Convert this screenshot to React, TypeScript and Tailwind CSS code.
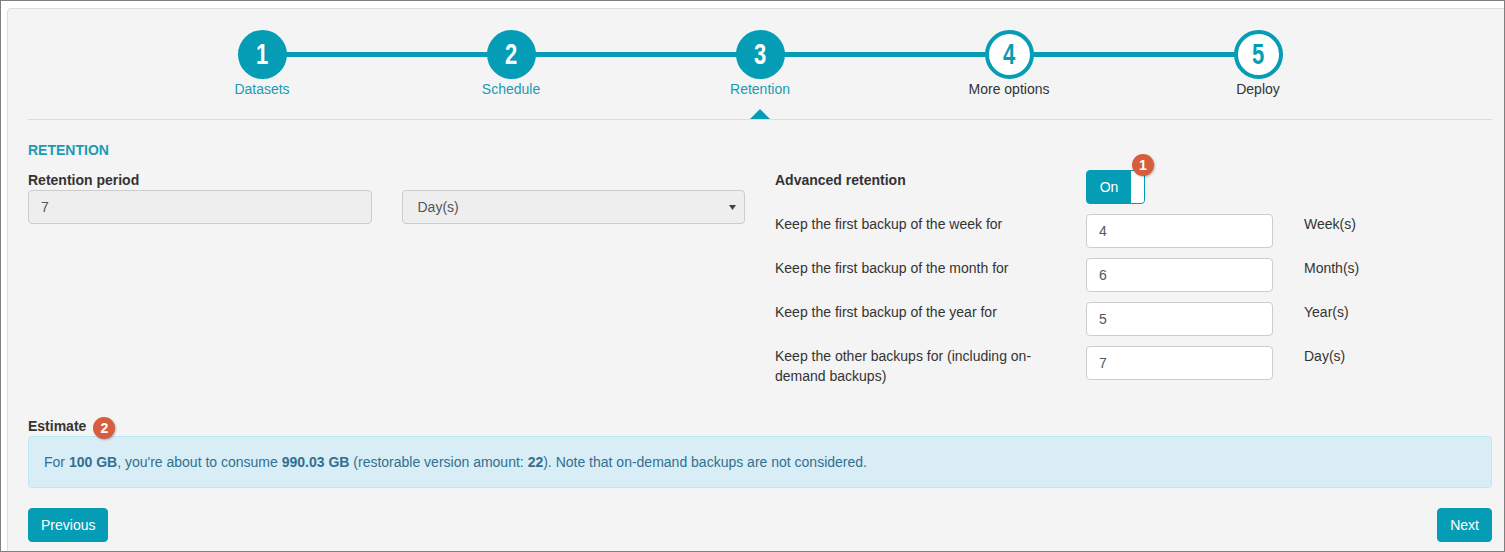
import React from "react";

function Step({ n, label, done }: { n: number; label: string; done: boolean }) {
  return (
    <div className="flex-1 flex flex-col items-center">
      <div
        className={
          done
            ? "relative z-10 w-[49px] h-[49px] rounded-full bg-[#049db5] text-white flex items-center justify-center"
            : "relative z-10 w-[49px] h-[49px] rounded-full bg-white border-[4px] border-[#049db5] text-[#049db5] flex items-center justify-center"
        }
      >
        <span className="inline-block scale-x-[0.76] font-bold text-[29px] leading-none font-['Liberation_Sans',Arial,sans-serif]">
          {n}
        </span>
      </div>
      <div className={done ? "text-[14px] leading-[20px] text-[#1a9bb4]" : "text-[14px] leading-[20px] text-[#333]"}>
        {label}
      </div>
    </div>
  );
}

function Badge({ n, className }: { n: number; className: string }) {
  return (
    <span
      className={
        "absolute w-[22px] h-[22px] rounded-full bg-[#d65d3d] text-white text-[14px] font-bold leading-none flex items-center justify-center shadow-[1px_1px_2px_rgba(0,0,0,0.25)] " +
        className
      }
    >
      {n}
    </span>
  );
}

function Row({ label, value, unit }: { label: string; value: string; unit: string }) {
  return (
    <div className="flex mt-[10px]">
      <div className="w-[311px] pr-[20px] leading-[20px]">{label}</div>
      <div className="w-[187px] h-[34px] shrink-0 bg-white border border-[#ccc] rounded-[4px] pl-[12px] flex items-center text-[#555]">
        {value}
      </div>
      <div className="pl-[31px] leading-[20px]">{unit}</div>
    </div>
  );
}

export default function App() {
  return (
    <div className="w-[1505px] h-[552px] border border-[#7f7f7f] bg-white overflow-hidden font-['Liberation_Sans',Arial,sans-serif] text-[14px] leading-[20px] text-[#333]">
      <div className="ml-[6px] mt-[7px] w-[1506px] bg-[#f4f4f4] border border-[#ddd] rounded-tl-[4px] px-[20px] pt-[21px] pb-[20px]">
        {/* Stepper */}
        <div className="relative mx-auto w-[1245px] flex">
          <div className="absolute left-[124.5px] right-[124.5px] top-[22px] h-[5px] bg-[#049db5]" />
          <Step n={1} label="Datasets" done />
          <Step n={2} label="Schedule" done />
          <Step n={3} label="Retention" done />
          <Step n={4} label="More options" done={false} />
          <Step n={5} label="Deploy" done={false} />
        </div>
        <div className="relative h-[20px]">
          <div className="absolute bottom-0 left-1/2 -translate-x-1/2 w-0 h-0 border-l-[10px] border-r-[10px] border-b-[10px] border-l-transparent border-r-transparent border-b-[#049db5]" />
        </div>
        <div className="h-px bg-[#ddd]" />

        {/* Retention section */}
        <div className="mt-[20px] font-bold text-[#1a9bb4] uppercase">Retention</div>
        <div className="grid grid-cols-2 gap-x-[30px] mt-[10px]">
          <div>
            <div className="font-bold">Retention period</div>
            <div className="grid grid-cols-2 gap-x-[30px]">
              <div className="h-[34px] bg-[#eee] border border-[#ccc] rounded-[4px] pl-[12px] flex items-center text-[#555]">
                7
              </div>
              <div className="h-[34px] bg-[#eee] border border-[#ccc] rounded-[4px] pl-[15px] pr-[8px] flex items-center justify-between text-[#555]">
                <span>Day(s)</span>
                <svg width="7" height="5" viewBox="0 0 7 5">
                  <path d="M0 0 L7 0 L3.5 5 Z" fill="#444" />
                </svg>
              </div>
            </div>
          </div>
          <div>
            <div className="flex">
              <div className="w-[311px] font-bold">Advanced retention</div>
              <div className="relative w-[59px] h-[34px] border border-[#049db5] bg-[#049db5] rounded-[4px] flex">
                <div className="flex-1 flex items-center justify-center text-white">On</div>
                <div className="w-[13px] bg-white rounded-r-[3px]" />
                <Badge n={1} className="left-[45px] top-[-17px]" />
              </div>
            </div>
            <Row label="Keep the first backup of the week for" value="4" unit="Week(s)" />
            <Row label="Keep the first backup of the month for" value="6" unit="Month(s)" />
            <Row label="Keep the first backup of the year for" value="5" unit="Year(s)" />
            <Row label="Keep the other backups for (including on-demand backups)" value="7" unit="Day(s)" />
          </div>
        </div>

        {/* Estimate */}
        <div className="mt-[30px] relative">
          <span className="font-bold">Estimate</span>
          <span className="relative inline-block w-[22px] h-[20px] align-top ml-[7px]">
            <Badge n={2} className="left-0 top-[1px]" />
          </span>
        </div>
        <div className="bg-[#d9edf7] border border-[#bce8f1] rounded-[4px] p-[15px] text-[#31708f]">
          For <b>100 GB</b>, you're about to consume <b>990.03 GB</b> (restorable version amount: <b>22</b>). Note that on-demand backups are not considered.
        </div>

        <div className="mt-[20px] flex justify-between">
          <button className="h-[34px] px-[12px] border border-[#049db5] bg-[#049db5] text-white rounded-[4px] text-[14px]">
            Previous
          </button>
          <button className="h-[34px] px-[12px] border border-[#049db5] bg-[#049db5] text-white rounded-[4px] text-[14px]">
            Next
          </button>
        </div>
      </div>
    </div>
  );
}
